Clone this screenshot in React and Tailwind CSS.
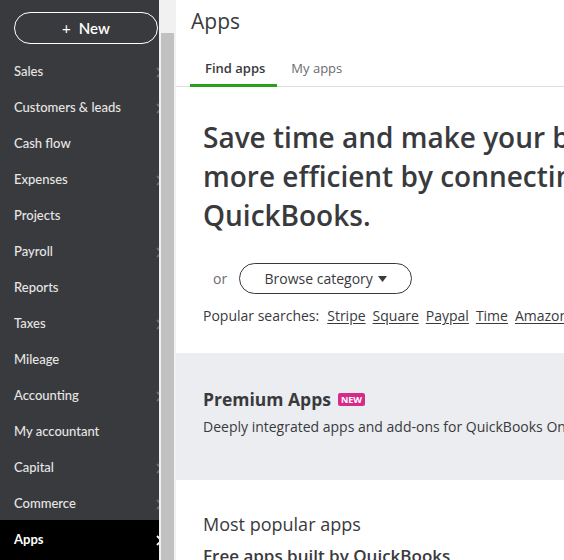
import React from "react";

const items = [
  ["Sales", true],
  ["Customers & leads", true],
  ["Cash flow", false],
  ["Expenses", true],
  ["Projects", false],
  ["Payroll", true],
  ["Reports", false],
  ["Taxes", true],
  ["Mileage", false],
  ["Accounting", true],
  ["My accountant", false],
  ["Capital", true],
  ["Commerce", true],
];

function Chevron({ className }) {
  return (
    <svg width="7" height="11" viewBox="0 0 7 11" className={className}>
      <path d="M1 1l4.5 4.5L1 10" fill="none" stroke="currentColor" strokeWidth="1.8" />
    </svg>
  );
}

export default function App() {
  return (
    <div
      className="flex h-[560px] w-[564px] overflow-hidden bg-white"
      style={{ fontFamily: "Lato, 'Open Sans', sans-serif" }}
    >
      <div className="relative w-[159px] shrink-0 overflow-hidden bg-[#393a3d]">
        <div className="px-[14px] pt-[12px]">
          <div className="flex h-[32px] w-[144px] items-center justify-center rounded-full border-[1.5px] border-white text-[15px] font-semibold text-white">
            <span className="mr-[8px] font-normal">+</span>New
          </div>
        </div>
        <div className="mt-[10px] flex flex-col">
          {items.map(([label, chev]) => (
            <div key={label} className="flex h-[36px] items-center justify-between pl-[14px] pr-0">
              <span className="text-[13px] font-medium text-[#e6e6e6]">{label}</span>
              {chev && <Chevron className="mr-[-4px] text-[#6b6c70]" />}
            </div>
          ))}
          <div className="-mt-[2px] flex h-[40px] items-center justify-between bg-black pl-[14px]">
            <span className="text-[13px] font-bold text-white">Apps</span>
            <Chevron className="mr-[-4px] text-white" />
          </div>
        </div>
      </div>
      <div className="flex w-[17px] shrink-0 flex-col bg-[#f1f1f1] px-[2px]">
        <div className="mt-[33px] flex-1 bg-[#c1c1c1]" />
      </div>
      <div
        className="min-w-0 flex-1 overflow-hidden text-[#393a3d]"
        style={{ fontFamily: "'Open Sans', Lato, sans-serif" }}
      >
        <div className="pl-[15px] pt-[8px] text-[21px] font-medium leading-[26px]">Apps</div>
        <div className="mt-[26px] flex border-b border-[#dcdcdc] pl-[14px]">
          <div className="-mb-px border-b-[3px] border-[#2ca01c] pb-[8px] pl-[15px] pr-[12px] text-[13px] font-semibold leading-[16px]">
            Find apps
          </div>
          <div className="px-[14px] pb-[8px] text-[13px] leading-[16px] text-[#6b6c72]">My apps</div>
        </div>
        <div className="whitespace-nowrap pl-[27px]">
          <h1 className="mt-[31px] text-[28px] font-semibold leading-[39px]">
            Save time and make your business
            <br />
            more efficient by connecting apps to
            <br />
            QuickBooks.
          </h1>
          <div className="mt-[28px] flex items-center">
            <span className="ml-[10px] mr-[12px] text-[14px] text-[#6b6c72]">or</span>
            <div className="flex h-[31px] w-[173px] items-center justify-center rounded-full border border-[#393a3d] text-[14px] font-medium">
              Browse category
              <svg width="9" height="6" viewBox="0 0 9 6" className="ml-[5px]">
                <path d="M0 0h9L4.5 6z" fill="#393a3d" />
              </svg>
            </div>
          </div>
          <div className="mt-[11px] flex gap-[7px] text-[14px]">
            <span className="mr-[1px]">Popular searches:</span>
            {["Stripe", "Square", "Paypal", "Time", "Amazon"].map((s) => (
              <span key={s} className="underline underline-offset-2">{s}</span>
            ))}
          </div>
        </div>
        <div className="mt-[27px] h-[127px] whitespace-nowrap bg-[#ecedf0] pl-[27px] pt-[35px]">
          <div className="flex items-center">
            <span className="text-[17.5px] font-bold leading-[22px]">Premium Apps</span>
            <span className="ml-[7px] rounded-[2px] bg-[#d52b8a] px-[3px] text-[9px] font-bold leading-[13px] text-white">
              NEW
            </span>
          </div>
          <div className="mt-[8px] text-[14px] leading-[18px]">
            Deeply integrated apps and add-ons for QuickBooks Online
          </div>
        </div>
        <div className="whitespace-nowrap pl-[27px] pt-[33px]">
          <div className="text-[18px] font-medium leading-[22px]">Most popular apps</div>
          <div className="mt-[10px] text-[17px] font-semibold leading-[22px]">Free apps built by QuickBooks</div>
        </div>
      </div>
    </div>
  );
}
